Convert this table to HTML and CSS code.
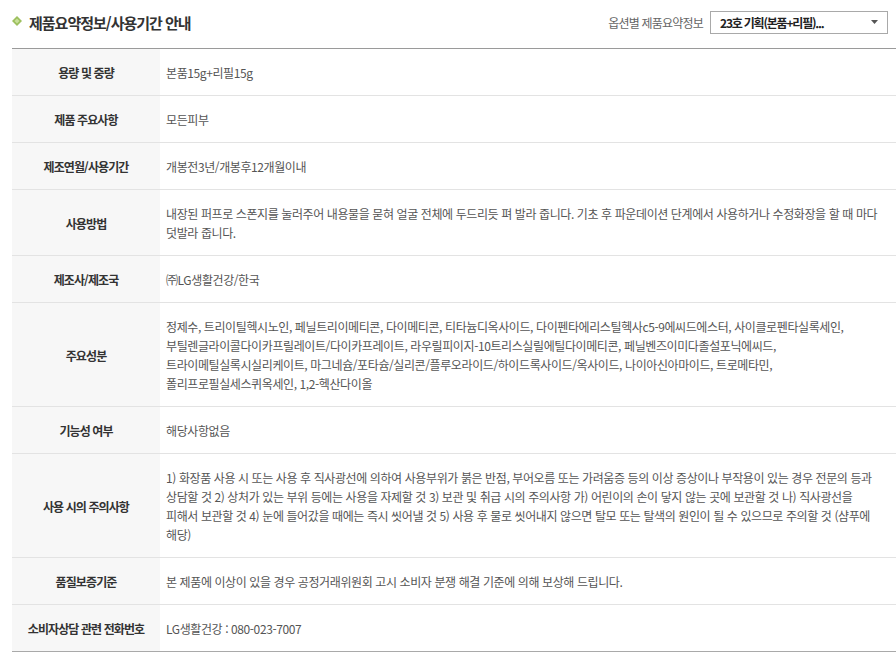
FILE: index.html
```html
<!DOCTYPE html>
<html lang="ko">
<head>
<meta charset="utf-8">
<link rel="stylesheet" href="styles.css">
</head>
<body>
<div class="wrap">
  <div class="head">
    <h2 class="title">
      <svg class="dia" width="10" height="10" viewBox="0 0 10 10"><path d="M5 0 L10 5 L5 10 L0 5 Z" fill="#9dc05f"/><path d="M5 2.5 L7.5 5 L5 7.5 L2.5 5 Z" fill="#c9e09a"/></svg>
      제품요약정보/사용기간 안내
    </h2>
    <div class="opt">
      <span class="opt-label">옵션별 제품요약정보</span>
      <div class="select">
        <span class="sel-text">23호 기획(본품+리필)...</span>
        <svg class="arrow" width="7" height="4" viewBox="0 0 7 4"><path d="M0 0 H7 L3.5 4 Z" fill="#555"/></svg>
      </div>
    </div>
  </div>
  <table class="info">
    <tr><th>용량 및 중량</th><td>본품15g+리필15g</td></tr>
    <tr><th>제품 주요사항</th><td>모든피부</td></tr>
    <tr><th>제조연월/사용기간</th><td>개봉전3년/개봉후12개월이내</td></tr>
    <tr><th>사용방법</th><td>내장된 퍼프로 스폰지를 눌러주어 내용물을 묻혀 얼굴 전체에 두드리듯 펴 발라 줍니다. 기초 후 파운데이션 단계에서 사용하거나 수정화장을 할 때 마다 덧발라 줍니다.</td></tr>
    <tr><th>제조사/제조국</th><td>㈜LG생활건강/한국</td></tr>
    <tr><th>주요성분</th><td>정제수, 트리이틸헥시노인, 페닐트리이메티콘, 다이메티콘, 티타늄디옥사이드, 다이펜타에리스틸헥사c5-9에씨드에스터, 사이클로펜타실록세인, 부틸렌글라이콜다이카프릴레이트/다이카프레이트, 라우릴피이지-10트리스실릴에틸다이메티콘, 페닐벤즈이미다졸설포닉에씨드, 트라이메틸실록시실리케이트, 마그네슘/포타슘/실리콘/플루오라이드/하이드록사이드/옥사이드, 나이아신아마이드, 트로메타민, 폴리프로필실세스퀴옥세인, 1,2-헥산다이올</td></tr>
    <tr><th>기능성 여부</th><td>해당사항없음</td></tr>
    <tr><th>사용 시의 주의사항</th><td>1) 화장품 사용 시 또는 사용 후 직사광선에 의하여 사용부위가 붉은 반점, 부어오름 또는 가려움증 등의 이상 증상이나 부작용이 있는 경우 전문의 등과 상담할 것 2) 상처가 있는 부위 등에는 사용을 자제할 것 3) 보관 및 취급 시의 주의사항 가) 어린이의 손이 닿지 않는 곳에 보관할 것 나) 직사광선을 피해서 보관할 것 4) 눈에 들어갔을 때에는 즉시 씻어낼 것 5) 사용 후 물로 씻어내지 않으면 탈모 또는 탈색의 원인이 될 수 있으므로 주의할 것 (샴푸에 해당)</td></tr>
    <tr><th>품질보증기준</th><td>본 제품에 이상이 있을 경우 공정거래위원회 고시 소비자 분쟁 해결 기준에 의해 보상해 드립니다.</td></tr>
    <tr><th>소비자상담 관련 전화번호</th><td>LG생활건강 : 080-023-7007</td></tr>
  </table>
</div>
</body>
</html>
```

FILE: styles.css
```css
html, body {
  margin: 0;
  padding: 0;
  background: #fff;
}
body {
  font-family: "Noto Sans CJK KR", "Noto Sans", sans-serif;
  color: #555;
  font-size: 12px;
}
.wrap {
  padding: 0 0 0 12px;
}
.head {
  display: flex;
  justify-content: space-between;
  align-items: center;
  height: 48px;
  border-bottom: 1px solid #9a9a9a;
}
.title {
  margin: 0;
  display: flex;
  align-items: center;
  gap: 7px;
  font-size: 15px;
  font-weight: bold;
  color: #333;
  letter-spacing: -1px;
  padding-bottom: 4px;
}
.dia {
  display: block;
  margin-top: -2px;
}
.opt {
  display: flex;
  align-items: center;
  gap: 7px;
  padding-right: 8px;
  padding-bottom: 4px;
}
.opt-label {
  color: #666;
  font-size: 12px;
  letter-spacing: -0.8px;
}
.select {
  width: 178px;
  height: 23px;
  border: 1px solid #a9a9a9;
  display: flex;
  align-items: center;
  justify-content: space-between;
  padding: 0 9px 0 9px;
  box-sizing: border-box;
}
.sel-text {
  font-weight: bold;
  color: #222;
  font-size: 12px;
  letter-spacing: -1.2px;
}
.arrow {
  display: block;
}
.info {
  width: 100%;
  border-collapse: collapse;
  border-bottom: 1px solid #a9a9a9;
}
.info th, .info td {
  border-top: 1px solid #e3e3e3;
  line-height: 19px;
  padding: 14px 0 13px;
  vertical-align: middle;
  font-size: 12px;
  word-break: keep-all;
}
.info tr:first-child th, .info tr:first-child td {
  border-top: 0;
}
.info th {
  width: 148px;
  background: #f7f7f7;
  color: #333;
  font-weight: bold;
  text-align: center;
  letter-spacing: -0.9px;
}
.info td {
  color: #555;
  text-align: left;
  padding-left: 6px;
  padding-right: 10px;
  letter-spacing: -0.4px;
}
```
